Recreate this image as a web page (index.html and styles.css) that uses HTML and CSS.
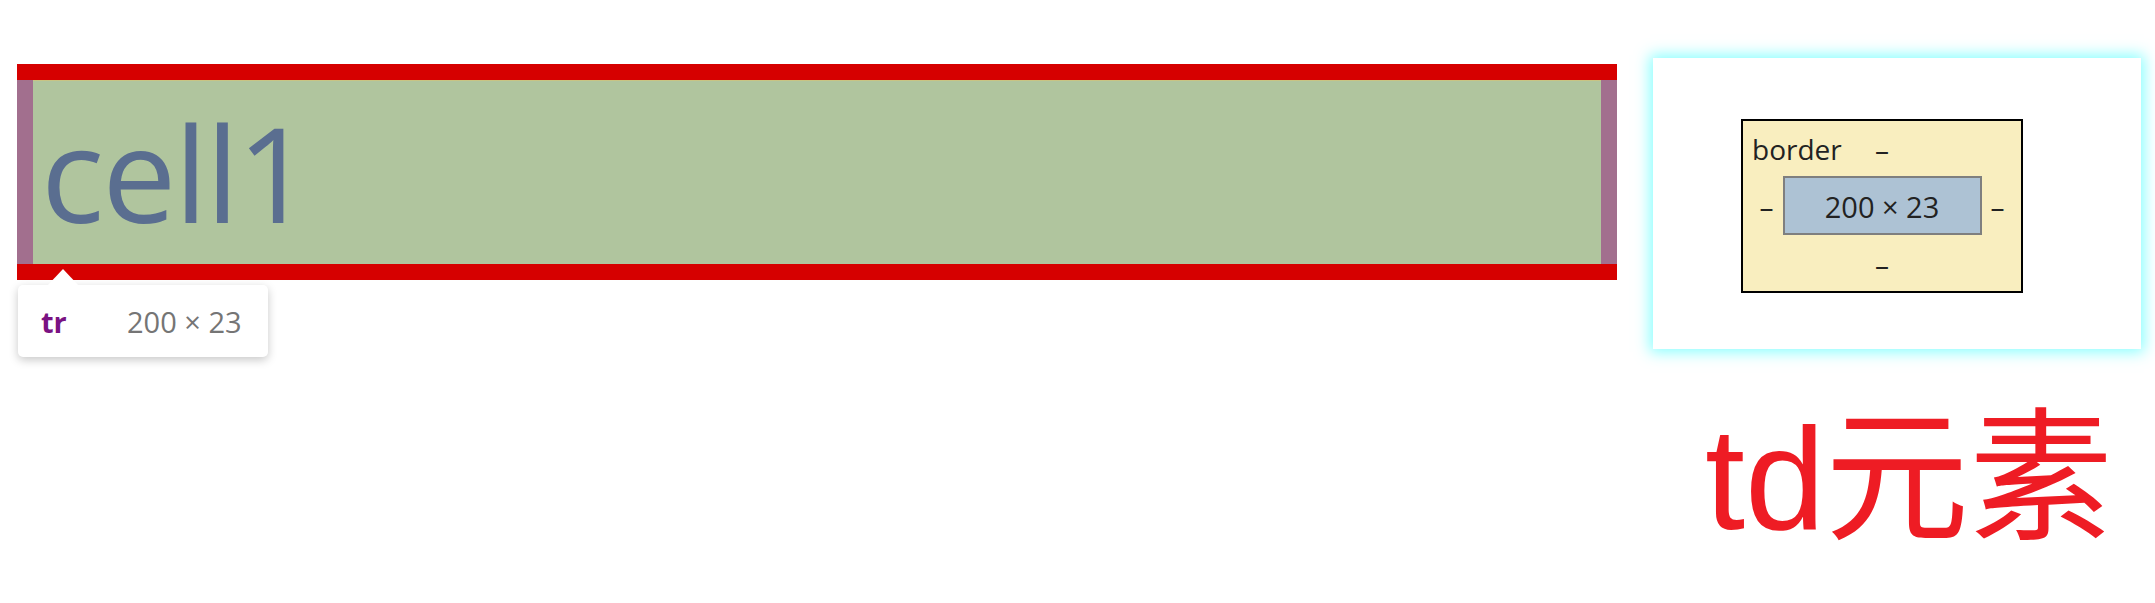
FILE: index.html
```html
<!DOCTYPE html>
<html>
<head>
<meta charset="utf-8">
<link rel="stylesheet" href="styles.css">
</head>
<body>
<div class="page">
  <div class="left">
    <div class="tr">
      <div class="td">cell1</div>
    </div>
    <div class="tip">
      <span class="tip-tag">tr</span>
      <span class="tip-size">200 × 23</span>
    </div>
  </div>
  <div class="right">
    <div class="panel">
      <div class="bm">
        <div class="bm-top">
          <span class="bm-label">border</span>
          <span class="dash">–</span>
          <span></span>
        </div>
        <div class="bm-mid">
          <span class="dash">–</span>
          <div class="bm-content">200 × 23</div>
          <span class="dash">–</span>
        </div>
        <div class="bm-bottom"><span class="dash">–</span></div>
      </div>
    </div>
    <div class="caption">td元素</div>
  </div>
</div>
</body>
</html>
```
FILE: styles.css
```css
html, body {
  margin: 0;
  padding: 0;
  background: #ffffff;
}
.page {
  display: flex;
  align-items: flex-start;
  gap: 36px;
  font-family: "Open Sans", "Noto Sans", sans-serif;
}
.left {
  padding: 64px 0 0 17px;
  display: flex;
  flex-direction: column;
  align-items: flex-start;
}
.tr {
  width: 1568px;
  border-top: 16px solid #d60000;
  border-bottom: 16px solid #d60000;
  padding: 0 16px;
  background: #a26f8e;
}
.td {
  height: 184px;
  background: #b0c59e;
  border-top: 1px solid #c9c483;
  box-sizing: border-box;
  color: #5a6e90;
  font-size: 132px;
  line-height: 182px;
  padding-left: 8px;
  letter-spacing: -2px;
}
.tip {
  position: relative;
  margin: 5px 0 0 1px;
  width: 250px;
  height: 72px;
  box-sizing: border-box;
  background: #ffffff;
  border-radius: 5px;
  box-shadow: 0 3px 10px rgba(0, 0, 0, 0.22);
  display: flex;
  align-items: center;
  padding: 0 0 0 23px;
  font-size: 29px;
}
.tip::before {
  content: "";
  position: absolute;
  left: 29px;
  top: -16px;
  border-left: 16px solid transparent;
  border-right: 16px solid transparent;
  border-bottom: 17px solid #ffffff;
}
.tip-tag {
  color: #7a1282;
  font-weight: 700;
  width: 86px;
}
.tip-size {
  color: #757575;
}
.right {
  padding-top: 58px;
  display: flex;
  flex-direction: column;
}
.panel {
  width: 488px;
  height: 291px;
  background: #ffffff;
  box-shadow: 0 0 14px 3px rgba(120, 255, 255, 0.9);
  display: flex;
  align-items: flex-start;
  padding: 61px 0 0 88px;
  box-sizing: border-box;
}
.bm {
  width: 282px;
  height: 174px;
  box-sizing: border-box;
  border: 2px solid #000000;
  background: #f9eebf;
  color: #222222;
  font-size: 28px;
  display: flex;
  flex-direction: column;
}
.bm-top {
  display: grid;
  grid-template-columns: 1fr auto 1fr;
  align-items: start;
  height: 55px;
  padding-top: 9px;
  box-sizing: border-box;
  line-height: 38px;
}
.bm-label {
  padding-left: 9px;
}
.bm-mid {
  display: flex;
  align-items: center;
  justify-content: center;
  gap: 9px;
  height: 59px;
}
.bm-content {
  width: 199px;
  height: 59px;
  box-sizing: border-box;
  border: 2px solid #7f7f7f;
  background: #adc2d4;
  display: flex;
  align-items: center;
  justify-content: center;
  font-size: 29px;
  padding-top: 1px;
}
.bm-bottom {
  flex: 1;
  display: flex;
  align-items: center;
  justify-content: center;
  padding-top: 2px;
}
.dash {
  font-size: 28px;
}
.caption {
  margin: 51px 0 0 52px;
  color: #ee1c24;
  font-family: "Liberation Sans", "Noto Sans CJK SC", sans-serif;
  font-size: 144px;
  line-height: 160px;
  white-space: nowrap;
}
```
